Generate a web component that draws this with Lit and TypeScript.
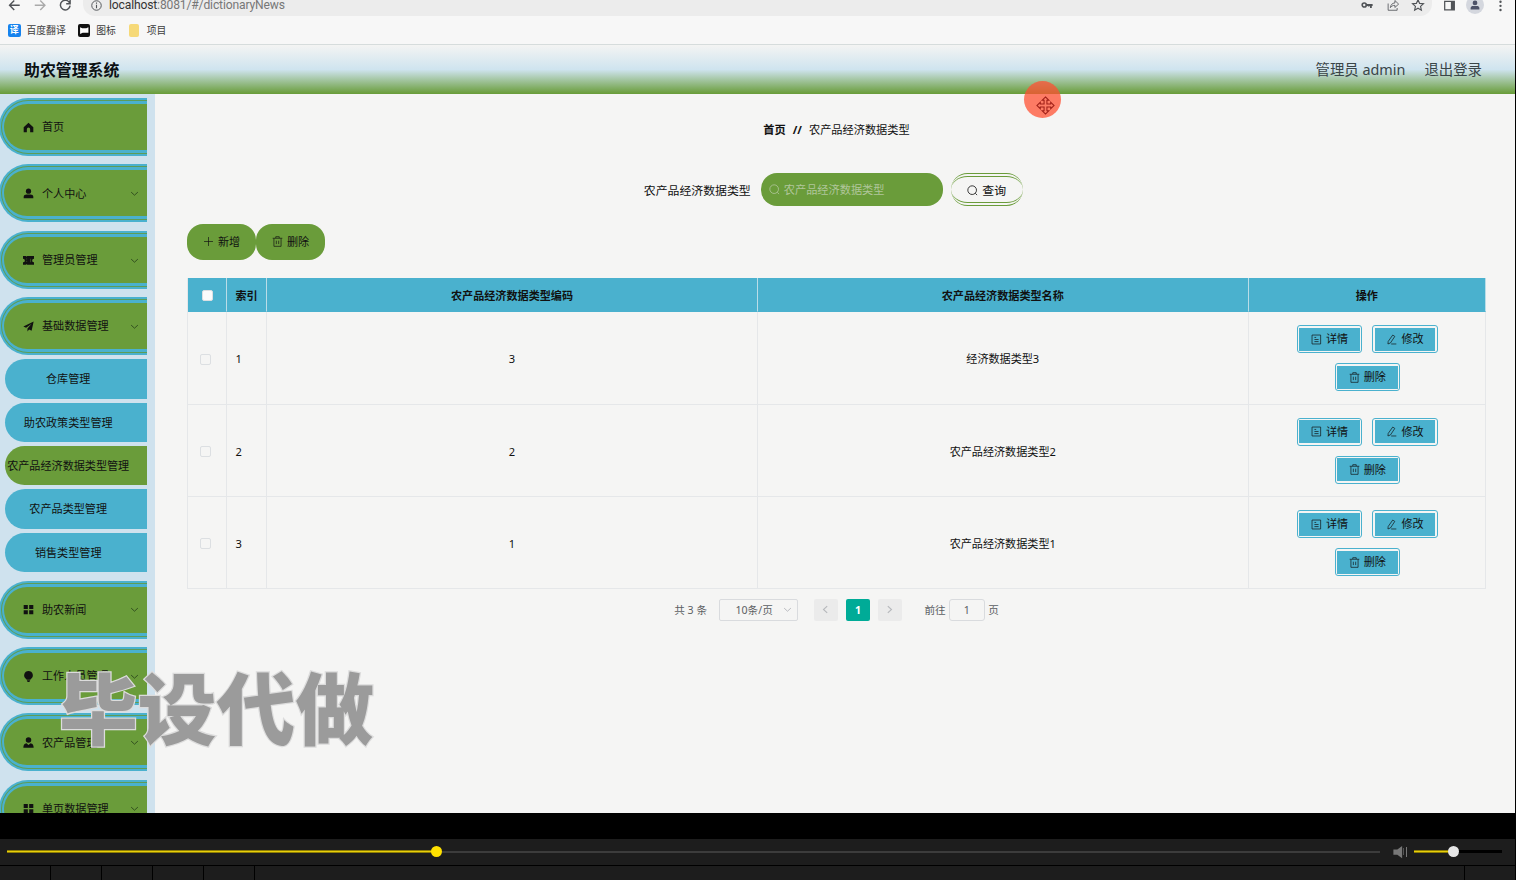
import { LitElement, html, css, svg } from "lit";
import { customElement } from "lit/decorators.js";
import { classMap } from "lit/directives/class-map.js";

const icons: Record<string, unknown> = {
  home: svg`<path d="M8 1 1 7.5V15h4.6v-4.5a2.4 2.4 0 0 1 4.8 0V15H15V7.5z" fill="currentColor"/>`,
  user: svg`<circle cx="8" cy="4.7" r="3.8" fill="currentColor"/><path d="M1 15v-2.2C1 10.500 3 9.500 5 9.500h6c2 0 4 1 4 3.300V15z" fill="currentColor"/>`,
  ticket: svg`<path d="M0 1.500h4.500l.8 1 .8-1H16v3.800a2.700 2.700 0 0 0 0 5.400v3.300H6.100l-.8-1-.8 1H0v-3.300a2.700 2.700 0 0 0 0-5.400z" fill="currentColor"/><path d="M5.300 5v1.500m0 2v1.500M11 5.500v5" stroke="#6a9c3a" stroke-width=".6"/>`,
  plane: svg`<path d="M15.500.8.500 8l4 1.900L12.500 4 6.500 11v4.200l2.300-3 3.700 1.900z" fill="currentColor"/>`,
  grid: svg`<path d="M1 1.500h6v5.800H1zm8 0h6v5.800H9zM1 9h6v5.800H1zm8 0h6v5.800H9z" fill="currentColor"/>`,
  bulb: svg`<path d="M8 0a6.300 6.300 0 0 1 3.400 11.600l-.7 1.100H5.300l-.7-1.100A6.300 6.300 0 0 1 8 0zM5.500 13.300h5L9.300 16H6.700z" fill="currentColor"/>`,
  member: svg`<circle cx="8" cy="4.500" r="4" fill="currentColor"/><path d="M.5 15.500c0-4 1.500-6 4.500-6.500L8 11.500 11 9c3 .5 4.500 2.500 4.500 6.500z" fill="currentColor"/>`,
  down: svg`<path d="m2 5.500 6 5.500 6-5.500" fill="none" stroke="currentColor" stroke-width="1.500"/>`,
  search: svg`<circle cx="7.500" cy="7.500" r="6.300" fill="none" stroke="currentColor" stroke-width="1.200"/><path d="m12 12 2.700 2.700" stroke="currentColor" stroke-width="1.200"/>`,
  plus: svg`<path d="M8 1.500v13M1.500 8h13" stroke="currentColor" stroke-width="1"/>`,
  trash: svg`<path d="M1 3.300h14M5.500 3v-2h5v2M2.800 3.500v11.500h10.400V3.500M6.300 6.800v5M9.700 6.800v5" fill="none" stroke="currentColor" stroke-width="1"/>`,
  doc: svg`<path d="M1.500 1.500h12.500v13H1.500zM5 5h2.500M5 8h6M5 11h6" fill="none" stroke="currentColor" stroke-width="1"/>`,
  edit: svg`<path d="M9.800 1.500 12.800 3.500 6.500 13 2.800 14.500 3.200 10.800zM7.500 14.500h7.500" fill="none" stroke="currentColor" stroke-width="1"/>`,
  left: svg`<path d="m11 2-6.500 6 6.500 6" fill="none" stroke="currentColor" stroke-width="2"/>`,
  right: svg`<path d="m5 2 6.500 6-6.500 6" fill="none" stroke="currentColor" stroke-width="2"/>`,
  back: svg`<path d="M15 8H2M8 2 2 8l6 6" fill="none" stroke="currentColor" stroke-width="1.800"/>`,
  forward: svg`<path d="M1 8h13M8 2l6 6-6 6" fill="none" stroke="currentColor" stroke-width="1.800"/>`,
  reload: svg`<path d="M13.800 5.500A6.200 6.200 0 1 0 14.200 8.500M14.200 1v5h-5" fill="none" stroke="currentColor" stroke-width="1.900"/>`,
  info: svg`<circle cx="8" cy="8" r="6.900" fill="none" stroke="currentColor" stroke-width="1.400"/><path d="M8 7v5M8 3.800v1.700" stroke="currentColor" stroke-width="1.600"/>`,
  key: svg`<circle cx="4.300" cy="8" r="2.700" fill="none" stroke="currentColor" stroke-width="2.200"/><path d="M7 8h8.500M13.200 8v4M10.300 8v2" fill="none" stroke="currentColor" stroke-width="2.400"/>`,
  share: svg`<path d="M1.500 6v9h12v-3M4.500 11.500c.5-4 2.500-6 6-6.200V2L15.500 6.800 10.500 11.300V8.500c-3 0-4.500 1-6 3z" fill="none" stroke="currentColor" stroke-width="1.100"/>`,
  star: svg`<path d="m8 1 2.100 4.800 5.200.5-3.900 3.500 1.100 5.100L8 12.200l-4.500 2.700 1.100-5.100L.7 6.300l5.200-.5z" fill="none" stroke="currentColor" stroke-width="1.500"/>`,
  panel: svg`<path d="M1 2h14v12.500H1z" fill="none" stroke="currentColor" stroke-width="1.800"/><path d="M10 2h5v12.500h-5z" fill="currentColor"/>`,
  dots: svg`<circle cx="8" cy="2.500" r="1.700" fill="currentColor"/><circle cx="8" cy="8.500" r="1.700" fill="currentColor"/><circle cx="8" cy="14.500" r="1.700" fill="currentColor"/>`,
  speaker: svg`<path d="M1 5h4.500L11 1v14l-5.500-4H1z" fill="currentColor"/>`,
  move: svg`<path d="M8 .8 10.800 3.600H9.200v3.200h3.200V5.200L15.200 8l-2.800 2.800V9.200H9.200v3.200h1.600L8 15.200 5.200 12.400h1.600V9.200H3.600v1.600L.8 8l2.800-2.800v1.600h3.200V3.600H5.200z" fill="none" stroke="currentColor" stroke-width=".9"/>`,
};

const icon = (name: string, cls = "") =>
  html`<svg class="ic ${cls}" viewBox="0 0 16 16">${icons[name]}</svg>`;

const menu: { icon: string; label: string; plain?: boolean; children?: string[] }[] = [
  { icon: "home", label: "首页", plain: true },
  { icon: "user", label: "个人中心" },
  { icon: "ticket", label: "管理员管理" },
  {
    icon: "plane",
    label: "基础数据管理",
    children: ["仓库管理", "助农政策类型管理", "农产品经济数据类型管理", "农产品类型管理", "销售类型管理"],
  },
  { icon: "grid", label: "助农新闻" },
  { icon: "bulb", label: "工作人员管理" },
  { icon: "member", label: "农产品管理" },
  { icon: "grid", label: "单页数据管理" },
];

const rows = [
  { index: 1, code: 3, name: "经济数据类型3" },
  { index: 2, code: 2, name: "农产品经济数据类型2" },
  { index: 3, code: 1, name: "农产品经济数据类型1" },
];

@customElement("app-root")
export class AppRoot extends LitElement {
  static styles = css`
    :host { display: block; width: 1516px; height: 880px; overflow: hidden; background: #000; }
    * { box-sizing: border-box; }
    .screen {
      position: relative; display: flex; flex-direction: column; width: 1515px; height: 813px; overflow: hidden;
      background: #f5f5f4; color: #111; font: 11.1px/16px "Noto Sans", "Noto Sans CJK SC", sans-serif;
    }
    .ic { width: 11px; height: 11px; flex: none; display: block; overflow: visible; }
    .nav { display: flex; height: 16px; flex: none; color: #505357; background: #f7f7f7; }
    .nav-row { display: flex; align-items: center; width: 100%; height: 22px; margin-top: -6px; flex: none; }
    .nav-btns { display: flex; align-items: center; gap: 13px; padding-left: 8px; width: 83px; flex: none; }
    .nav-btns .ic { width: 12.500px; height: 12.500px; }
    .faint { color: #aaa; }
    .omni { display: flex; align-items: center; width: 1349px; height: 22px; background: #ececec; border-radius: 0 0 12px 12px; padding: 0 8px 0 8px; }
    .omni .url { margin-left: 7px; font: 12.100px/16px Roboto, sans-serif; color: #777; letter-spacing: -.15px; flex: 1; }
    .url b { font-weight: 400; color: #333; }
    .omni-icons { display: flex; gap: 13.500px; }
    .omni-icons .ic { width: 12px; height: 12px; }
    .nav-right { display: flex; align-items: center; gap: 14px; margin-left: 12px; }
    .avatar { width: 18px; height: 18px; border-radius: 50%; background: #d4d7de; display: grid; place-items: center; color: #4d5268; margin: 0 -3px; }
    .avatar .ic { width: 10px; height: 10px; }
    .marks { display: flex; align-items: center; height: 29px; flex: none; padding: 1px 0 0 8px; font-size: 9.800px; color: #3c3c3c; background: #f7f7f7; border-bottom: 1px solid #d6dcdc; }
    .chip { width: 12.500px; height: 12.500px; border-radius: 2px; flex: none; margin-right: 6px; }
    .tr { background: #1683ee; color: #fff; font: bold 9px/12px "Noto Sans CJK SC", sans-serif; text-align: center; }
    .pic { background: #111; margin-left: 12px; }
    .folder { background: #f6d978; width: 10px; margin-left: 13px; margin-right: 8px; }
    .top {
      display: flex; align-items: center; justify-content: space-between; flex: none; height: 49px; padding: 1px 33px 0 24px;
      background: linear-gradient(180deg, #f4f4f3 0%, #cfe4ef 50%, #689c38 100%);
    }
    .brand { font-size: 15.900px; font-weight: 700; color: #0c1114; }
    .who { display: flex; gap: 19px; font-size: 14.400px; color: #3a4548; }
    .body { display: flex; flex: 1; min-height: 0; }
    .side { width: 155px; flex: none; background: #cfe2ee; padding-top: 4px; overflow: hidden; }
    .item {
      display: flex; align-items: center; height: 58px; width: 148.400px; margin: 0 0 8.400px -1px; padding: .6px 8px 0 24px;
      border-radius: 29px 0 0 29px; background: #4ab1ce; position: relative; isolation: isolate;
    }
    .item::before, .item::after { content: ""; position: absolute; z-index: -1; }
    .item::before { inset: 2px 0 2px 2px; border: 1px solid #5d9d58; border-right: 0; border-radius: 27px 0 0 27px; }
    .item::after { inset: 6px 0 6px 5px; border-radius: 24px 0 0 24px; background: #6a9c3a; }
    .item span { margin-left: 8px; flex: 1; }
    .item .arrow { width: 9px; height: 9px; color: #28421a; }
    .subs { display: flex; flex-direction: column; gap: 4px; margin: -4.400px 0 8.400px 5px; }
    .sub { height: 39.400px; width: 142.400px; border-radius: 20px 0 0 20px; background: #4ab1ce; display: flex; align-items: center; justify-content: center; padding: .6px 16px 0 0; white-space: nowrap; }
    .sub.on { background: #6a9c3a; }
    .main { flex: 1; padding: 0 29px 0 32px; min-width: 0; }
    .crumb { display: flex; justify-content: center; gap: 7px; margin-top: 28px; font-size: 11.200px; }
    .find { display: flex; justify-content: center; align-items: center; margin: 35px 6.500px 0 0; height: 33px; font-size: 11.900px; }
    .box { width: 182px; height: 33px; border-radius: 16px; background: #6a9c3a; color: #b0c69a; display: flex; align-items: center; gap: 4px; padding-left: 8px; margin: 0 8px 0 10px; font-size: 11.200px; }
    .query { width: 72px; height: 33px; border: 4px double #6a9c3a; border-left-width: 0; border-right-width: 0; border-radius: 17px; display: flex; align-items: center; justify-content: center; gap: 4px; padding-top: 1px; }
    .tools { display: flex; margin-top: 17.500px; }
    .pill { width: 69px; height: 36px; border-radius: 16px; background: #6a9c3a; display: flex; align-items: center; justify-content: center; gap: 4px; }
    .grid { margin-top: 18.200px; border-left: 1px solid #e5e7e9; }
    .tr-row { display: grid; grid-template-columns: 39px 40px 491px 490.500px 1fr; height: 92.400px; }
    .tr-row > div { display: flex; align-items: center; justify-content: center; border-right: 1px solid #e5e7e9; border-bottom: 1px solid #e5e7e9; padding-top: 2.600px; }
    .tr-row > .idx { justify-content: flex-start; padding-left: 8.500px; }
    .tr-row.head { height: 34.500px; background: #4ab1ce; font-weight: 700; }
    .head > div { border-bottom-color: #4ab1ce; border-right-color: #b9dde8; }
    .check { width: 11px; height: 11px; border: 1px solid #dcdfe2; border-radius: 2px; margin-right: 2.500px; }
    .head .check { background: #fbfbfb; margin-right: -1px; }
    .tr-row > .ops { flex-wrap: wrap; align-content: center; gap: 10px; padding: 1px 19px 0 20px; }
    .op { width: 65.500px; height: 28px; border: 1px solid #4ab1ce; border-radius: 3px; padding: 1.500px; }
    .op div { height: 100%; background: #4ab1ce; display: flex; align-items: center; justify-content: center; gap: 4px; }
    .pages { display: flex; align-items: center; justify-content: center; margin-top: 8.500px; height: 24px; font-size: 10.600px; color: #5c5f63; }
    .size { width: 79px; height: 22px; margin-left: 12.500px; border: 1px solid #d9dbde; border-radius: 2px; display: flex; align-items: center; justify-content: space-between; padding: 0 5px 0 15px; }
    .size .ic { width: 9px; height: 9px; color: #aeb0b5; }
    .pg { width: 24px; height: 22px; border-radius: 2px; background: #ebebeb; color: #b6b8bc; display: grid; place-items: center; margin-left: 8px; }
    .pg .ic { width: 9px; height: 9px; }
    .pg.first { margin-left: 15.500px; }
    .pg.now { background: #00ab97; color: #fff; font-weight: 700; }
    .goto { margin-left: 22.500px; }
    .num { width: 36px; height: 22px; margin: 0 3.500px 0 3px; border: 1px solid #d9dbde; border-radius: 3px; display: grid; place-items: center; }
    .touch { position: absolute; left: 1024px; top: 81px; width: 37px; height: 37px; border-radius: 50%; background: rgba(255, 80, 50, .74); color: #a02018; }
    .touch .ic { position: absolute; left: 12px; top: 15px; width: 19px; height: 19px; }
    .mark { position: absolute; left: 59px; top: 648px; font: 900 78.800px/114px "Noto Sans CJK SC", sans-serif; color: #9b9b9b; -webkit-text-stroke: 2.500px #dcdcdc; paint-order: stroke fill; white-space: nowrap; }
    .player { display: flex; align-items: center; height: 26px; margin-top: 26px; width: 1515px; background: #1d1d1d; padding: 0 13px 1px 7px; }
    .track { display: flex; align-items: center; width: 1373px; }
    .done { width: 426px; height: 3px; background: #e8cf0a; border: solid #8e7e04; border-width: 1px 0; }
    .knob { width: 11px; height: 11px; border-radius: 50%; background: #ffe100; margin: 0 -2px; z-index: 1; }
    .rest { flex: 1; height: 2px; background: #3c3c3c; }
    .speaker { color: #777; width: 15px; height: 14px; margin-left: 12px; }
    .wave { width: 1px; height: 7px; background: #555; margin-left: -4px; }
    .wave.big { height: 10px; background: #777; margin-left: 2px; }
    .vol { display: flex; align-items: center; width: 88px; margin-left: 7px; }
    .vol .done { width: 36px; }
    .vol .knob { background: #e6e6e6; }
    .vol .rest { background: #000; height: 3px; }
    .cells { display: flex; gap: 1px; height: 14px; margin-top: 1px; width: 1515px; }
    .cells div { width: 50px; background: #1d1d1d; }
    .cells .wide { flex: 1; }
  `;

  private op(name: string, label: string) {
    return html`<div class="op"><div>${icon(name)}${label}</div></div>`;
  }

  render() {
    return html`
      <div class="screen">
        <div class="nav"><div class="nav-row">
          <div class="nav-btns">${icon("back")}${icon("forward", "faint")}${icon("reload")}</div>
          <div class="omni">${icon("info")}<span class="url"><b>localhost</b>:8081/#/dictionaryNews</span>
            <div class="omni-icons">${icon("key")}${icon("share")}${icon("star")}</div></div>
          <div class="nav-right">${icon("panel")}<div class="avatar">${icon("user")}</div>${icon("dots")}</div>
        </div></div>
        <div class="marks">
          <i class="chip tr">译</i>百度翻译
          <svg class="chip pic" viewBox="0 0 12 12"><path d="M2 3 4 4h4l2-1v5.500H4.500L2 9.500z" fill="#fff"/></svg>图标
          <i class="chip folder"></i>项目
        </div>
        <div class="top"><div class="brand">助农管理系统</div>
          <div class="who"><span>管理员 admin</span><span>退出登录</span></div></div>
        <div class="body">
          <div class="side">
            ${menu.map((m) => html`
              <div class="item">${icon(m.icon)}<span>${m.label}</span>${m.plain ? "" : icon("down", "arrow")}</div>
              ${m.children ? html`<div class="subs">${m.children.map((c, i) =>
                html`<div class=${classMap({ sub: true, on: i === 2 })}>${c}</div>`)}</div>` : ""}`)}
          </div>
          <div class="main">
            <div class="crumb"><b>首页</b><b>//</b><span>农产品经济数据类型</span></div>
            <div class="find">农产品经济数据类型
              <div class="box">${icon("search")}农产品经济数据类型</div>
              <div class="query">${icon("search")}查询</div></div>
            <div class="tools"><div class="pill">${icon("plus")}新增</div><div class="pill">${icon("trash")}删除</div></div>
            <div class="grid">
              <div class="tr-row head"><div><i class="check"></i></div><div class="idx">索引</div>
                <div>农产品经济数据类型编码</div><div>农产品经济数据类型名称</div><div>操作</div></div>
              ${rows.map((r) => html`<div class="tr-row"><div><i class="check"></i></div><div class="idx">${r.index}</div>
                <div>${r.code}</div><div>${r.name}</div>
                <div class="ops">${this.op("doc", "详情")}${this.op("edit", "修改")}${this.op("trash", "删除")}</div></div>`)}
            </div>
            <div class="pages">共 3 条<div class="size">10条/页${icon("down")}</div>
              <div class="pg first">${icon("left")}</div><div class="pg now">1</div><div class="pg">${icon("right")}</div>
              <span class="goto">前往</span><div class="num">1</div>页</div>
          </div>
        </div>
        <div class="touch">${icon("move")}</div>
        <div class="mark">毕设代做</div>
      </div>
      <div class="player">
        <div class="track"><div class="done"></div><div class="knob"></div><div class="rest"></div></div>
        ${icon("speaker", "speaker")}<div class="wave"></div><div class="wave big"></div>
        <div class="vol"><div class="done"></div><div class="knob"></div><div class="rest"></div></div>
      </div>
      <div class="cells"><div></div><div></div><div></div><div></div><div></div><div class="wide"></div><div></div></div>
    `;
  }
}
